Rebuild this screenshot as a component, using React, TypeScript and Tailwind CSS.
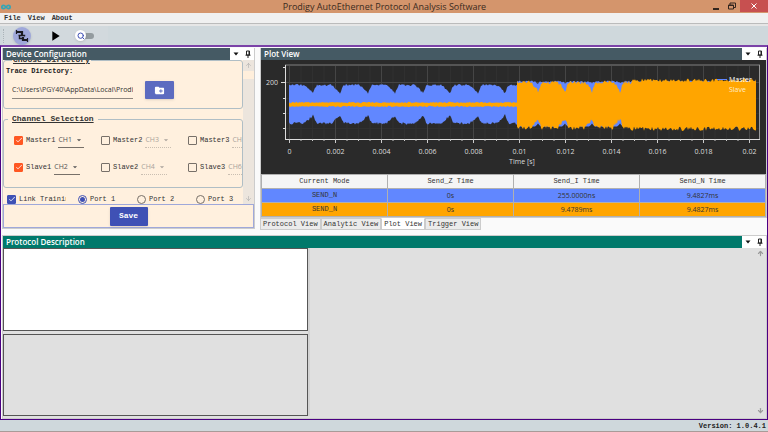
import { ArrowDown, ArrowUp, Infinity as InfinityIcon, Search } from "lucide-react";
import { MdArrowDropDown, MdCheck, MdCreateNewFolder, MdPlayArrow } from "react-icons/md";

const Pin = () => (
    <svg viewBox="0 0 8 8" className="h-2 w-2" fill="none" stroke="#222" aria-hidden="true">
        <path d="M2.5 1h3v4h-3zM1.5 5.2h5M4 5.2V8" />
        <path d="M5 1v4" />
    </svg>
);

type PanelHeaderProps = { title: string; color: string };

const PanelHeader = ({ title, color }: PanelHeaderProps) => (
    <div className="flex h-3 shrink-0 items-stretch bg-white">
        <h2 className={`flex flex-1 items-center pl-[3px] text-[8px] leading-3 font-semibold text-white ${color}`}>{title}</h2>
        <div className="flex w-6 items-center justify-around">
            <button aria-label={`${title} menu`}>
                <svg viewBox="0 0 6 4" className="h-1 w-[6px]" aria-hidden="true"><path d="M0.5 0.5h5L3 3.5z" fill="#111" /></svg>
            </button>
            <button aria-label={`Pin ${title}`}><Pin /></button>
        </div>
    </div>
);

type CheckProps = { id: string; label: string; checked?: boolean; blue?: boolean };

const Check = ({ id, label, checked, blue }: CheckProps) => (
    <div className="flex shrink-0 items-center gap-[3px]">
        <span className="grid place-items-center">
            <input
                id={id}
                type="checkbox"
                defaultChecked={checked}
                className={`peer h-[9px] w-[9px] appearance-none rounded-[1px] border border-[#777069] [grid-area:1/1] ${blue ? "checked:border-[#3f51b5] checked:bg-[#3f51b5]" : "checked:border-[#ff5722] checked:bg-[#ff5722]"}`}
            />
            <MdCheck className="pointer-events-none invisible h-2 w-2 text-white [grid-area:1/1] peer-checked:visible" />
        </span>
        <label htmlFor={id} className="whitespace-nowrap">{label}</label>
    </div>
);

type ChannelProps = { name: string; channel: string; active?: boolean };

const Channel = ({ name, channel, active }: ChannelProps) => (
    <div className="flex items-center gap-[3px]">
        <Check id={name} label={name} checked={active} />
        <div className={`flex h-4 w-[26px] shrink-0 items-center justify-between border-b ${active ? "border-[#777069] text-[#555]" : "border-dotted border-[#c9beb1] text-[#aaa39c]"}`}>
            <select aria-label={`${name} channel`} disabled={!active} className="w-4 appearance-none bg-transparent font-['Open_Sans',sans-serif] text-[7px] leading-3 opacity-100">
                <option>{channel}</option>
            </select>
            <MdArrowDropDown className="h-[10px] w-[10px]" />
        </div>
    </div>
);

const DeviceConfiguration = () => (
    <section className="flex w-[253px] shrink-0 flex-col border border-t-0 border-[#ccc] bg-[#fff0de]">
        <PanelHeader title="Device Configuration" color="bg-[#455a64]" />
        <div className="flex h-[144px] overflow-hidden font-['Liberation_Mono',monospace] text-[7px] leading-3 text-[#333]">
            <div className="min-w-0 flex-1">
                <fieldset className="-mt-[5px] h-[54px] min-w-0 rounded-[3px] border border-[#b0bec5] px-[2px]">
                    <legend className="ml-[6px] px-px text-[8px] leading-[10px] font-bold underline">Choose Directory</legend>
                    <label htmlFor="trace" className="block font-bold text-[#222]">Trace Directory:</label>
                    <div className="mt-1 flex items-center gap-3 pl-[6px]">
                        <input
                            id="trace"
                            defaultValue="C:\Users\PGY40\AppData\Local\Prodigy"
                            className="h-[18px] w-[121px] border-b border-[#8f877f] bg-transparent font-['Open_Sans',sans-serif] text-[7px] text-[#333] outline-none"
                        />
                        <button aria-label="Choose folder" className="flex h-[18px] w-[29px] items-center justify-center rounded-[1px] bg-[#5c6bc0] text-white shadow-sm">
                            <MdCreateNewFolder className="h-[11px] w-[11px]" />
                        </button>
                    </div>
                </fieldset>
                <fieldset className="mt-[5px] h-[74px] min-w-0 overflow-hidden rounded-[3px] border border-[#b0bec5]">
                    <legend className="ml-1 px-1 text-[8px] leading-[10px] font-bold underline">Channel Selection</legend>
                    <div className="grid grid-cols-[87px_87px_87px] gap-y-[11px] pt-2 pl-[10px]">
                        <Channel name="Master1" channel="CH1" active />
                        <Channel name="Master2" channel="CH3" />
                        <Channel name="Master3" channel="CH5" />
                        <Channel name="Slave1" channel="CH2" active />
                        <Channel name="Slave2" channel="CH4" />
                        <Channel name="Slave3" channel="CH6" />
                    </div>
                </fieldset>
                <div className="mt-[5px] flex pl-1">
                    <div className="mr-3 w-[59px] shrink-0 overflow-hidden"><Check id="training" label="Link Training" checked blue /></div>
                    {["Port 1", "Port 2", "Port 3"].map((port, i) => (
                        <label key={port} className="flex w-[59px] shrink-0 items-center gap-[3px] whitespace-nowrap">
                            <input type="radio" name="port" defaultChecked={i === 0} className="h-[9px] w-[9px] appearance-none rounded-full border border-[#777069] bg-clip-content p-px checked:border-[#3f51b5] checked:bg-[#3f51b5]" />
                            {port}
                        </label>
                    ))}
                </div>
            </div>
            <div className="flex w-[11px] flex-col items-center justify-between bg-[#ece5dd] text-[#aaa]">
                <button aria-label="Scroll up" className="flex h-[11px] items-center"><ArrowUp className="h-[7px] w-[7px]" /></button>
                <div className="mb-auto h-2 w-full bg-[#ffefdc]" />
                <button aria-label="Scroll down" className="flex h-[11px] items-center"><ArrowDown className="h-[7px] w-[7px]" /></button>
            </div>
        </div>
        <div className="flex h-6 items-center justify-center border border-[#9fa8da]">
            <button className="h-[19px] w-[38px] rounded-[1px] bg-[#3f51b5] font-['Liberation_Mono',monospace] text-[8px] font-bold text-white shadow-sm">Save</button>
        </div>
    </section>
);

// plot geometry, in svg units
const X0 = 28;
const STEP = 46;
const BURST = 256;
const END = 495;
const blueNotches = [52, 79, 107, 134, 162, 189, 217, 244];
const orangeNotches = [277, 304, 331, 359];

const noise = (n: number) => {
    const v = Math.sin(n * 127.1) * 43758.5453;
    return v - Math.floor(v);
};

// slow fall before a notch, quick rise after it
const dip = (x: number, notches: number[], depth: number, before: number, after: number) =>
    notches.reduce((most, n) => {
        const d = x - n;
        const t = d < 0 ? 1 + d / before : 1 - d / after;
        return t > 0 ? Math.max(most, Math.pow(t, 1.2) * depth) : most;
    }, 0);

const band = (from: number, to: number, top: (x: number) => number, bottom: (x: number) => number) => {
    const up: string[] = [];
    const down: string[] = [];
    for (let x = from; x <= to; x++) {
        up.push(`${x} ${top(x).toFixed(1)}`);
        down.unshift(`${x} ${bottom(x).toFixed(1)}`);
    }
    return `M${up.join("L")}L${down.join("L")}Z`;
};

const masterPath = band(X0, BURST, (x) => 24 + noise(x) * 2 + dip(x, blueNotches, 8, 9, 4), (x) => 62 + noise(x + 900) * 2.5 - dip(x, blueNotches, 8, 9, 4));
const masterTail = band(BURST, END - 1, (x) => 20.5 + noise(x) * 2 + dip(x, orangeNotches, 2, 3, 3), (x) => 66.5 - dip(x, orangeNotches, 3, 3, 3));
const slaveLine = band(X0, BURST, (x) => 41.8 + noise(x + 50) * 1.4, (x) => 45.8 + noise(x + 70) * 1.4);
const slavePath = band(
    BURST,
    END,
    (x) => (x > 370 ? 18.5 : 20.5) + noise(x + 3) * 3.6 + dip(x, orangeNotches, 9, 7, 4),
    (x) => (x > 370 ? 66.5 : 65.5) + noise(x + 11) * 4.4 - dip(x, orangeNotches, 9, 8, 4),
);

const Plot = () => (
    <svg viewBox="0 0 505 114" className="block w-full bg-[#2a2a2a] font-['Open_Sans',sans-serif] text-[7px]" role="img" aria-label="Master and slave signal over time">
        <g stroke="#303030">
            {Array.from({ length: 40 }, (_, i) => <path key={i} d={`M${X0 + i * 11.5 + 12} 5V79`} />)}
            <path d="M24 38.5H498M24 53.5H498M24 68.5H498" />
        </g>
        <g stroke="#454545">
            {Array.from({ length: 11 }, (_, i) => <path key={i} d={`M${X0 + i * STEP + 0.5} 5V79`} />)}
            <path d="M24 22.5H498" />
        </g>
        <path d="M24 5H499" stroke="#555" strokeWidth="2" />
        <path d="M498.5 5V79" stroke="#999" />
        <path d={masterPath} fill="#6187ff" />
        <path d={masterTail} fill="#6187ff" />
        <path d={slaveLine} fill="#ffa500" />
        <path d={slavePath} fill="#ffa500" />
        <path d="M24.5 5V80M24 79.5H499M20 22.5H24M22 7.5H24M22 38.5H24M22 53.5H24M22 68.5H24" stroke="#ddd" fill="none" />
        {Array.from({ length: 41 }, (_, i) => (
            <path key={i} d={`M${X0 + i * 11.5 + 0.5} 79v${i % 4 === 0 ? 4 : 2}`} stroke="#ccc" />
        ))}
        <g fill="#ddd">
            <text x="17" y="25" textAnchor="end">200</text>
            {["0", "0.002", "0.004", "0.006", "0.008", "0.01", "0.012", "0.014", "0.016", "0.018", "0.02"].map((t, i) => (
                <text key={t} x={X0 + i * STEP + 0.5} y="94" textAnchor="middle">{t}</text>
            ))}
            <text x="261" y="104" textAnchor="middle">Time [s]</text>
        </g>
        <path d="M456 19.5h10" stroke="#6187ff" />
        <g fill="#fff">
            <text x="468" y="22">Master</text>
            <text x="468" y="32" fill="#ffedcc">Slave</text>
        </g>
    </svg>
);

const rows = [
    { color: "bg-[#6187ff]", cells: ["0s", "255.0000ns", "9.4827ms"] },
    { color: "bg-[#ffa500]", cells: ["0s", "9.4789ms", "9.4827ms"] },
];

const tabs = ["Protocol View", "Analytic View", "Plot View", "Trigger View"];

const PlotView = () => (
    <section className="min-w-0 flex-1">
        <div className="border border-t-0 border-[#ccc]">
            <PanelHeader title="Plot View" color="bg-[#455a64]" />
            <Plot />
            <table className="w-full table-fixed border-collapse text-center font-['Liberation_Mono',monospace] text-[7px] leading-[13px] text-[#333]">
                <thead>
                    <tr className="bg-[#f5f5f5]">
                        {["Current Mode", "Send_Z Time", "Send_I Time", "Send_N Time"].map((h) => (
                            <th key={h} className="border border-[#b0b0b0] p-0 font-normal">{h}</th>
                        ))}
                    </tr>
                </thead>
                <tbody>
                    {rows.map((row) => (
                        <tr key={row.color} className={row.color}>
                            <td className="border border-[#b0b0b0] p-0">SEND_N</td>
                            {row.cells.map((cell, i) => (
                                <td key={i} className="border border-[#b0b0b0] p-0 font-['Open_Sans',sans-serif]">{cell}</td>
                            ))}
                        </tr>
                    ))}
                </tbody>
            </table>
        </div>
        <div role="tablist" className="flex font-['Liberation_Mono',monospace] text-[7px] leading-[10px] text-[#333]">
            {tabs.map((tab) => (
                <button
                    key={tab}
                    role="tab"
                    aria-selected={tab === "Plot View"}
                    className="border border-[#ccc] bg-[#ebebeb] px-[2px] whitespace-nowrap aria-selected:border-t-white aria-selected:bg-white"
                >
                    {tab}
                </button>
            ))}
        </div>
    </section>
);

const ProtocolDescription = () => (
    <section className="mt-[5px] flex flex-1 flex-col border border-[#ccc] bg-[#e0e0e0]">
        <PanelHeader title="Protocol Description" color="bg-[#00796b]" />
        <div className="flex flex-1 pb-[2px]">
            <div className="flex w-2/5 flex-col gap-[3px]">
                <div className="flex-1 border border-[#555] bg-white" />
                <div className="flex-1 border border-[#555]" />
            </div>
            <div className="flex flex-1 flex-col items-end justify-between border-l-2 border-[#d3d3d3] p-[2px] text-[#999]">
                <button aria-label="Scroll up"><ArrowUp className="h-[7px] w-[7px]" strokeWidth={4} /></button>
                <button aria-label="Scroll down"><ArrowDown className="h-[7px] w-[7px]" strokeWidth={4} /></button>
            </div>
        </div>
    </section>
);

const TitleBar = () => (
    <header className="flex h-[13px] items-center bg-[#d4956c] pl-px">
        <InfinityIcon className="h-[10px] w-[10px] text-[#35a5b5]" strokeWidth={4} />
        <h1 className="flex-1 pl-[46px] text-center font-['Open_Sans',sans-serif] text-[9px] leading-3 text-[#3a2a20]">Prodigy AutoEthernet Protocol Analysis Software</h1>
        <div className="flex h-3 items-center self-start text-[#33261e]">
            <button aria-label="Minimize" className="mr-2">
                <svg viewBox="0 0 8 8" className="h-2 w-2" aria-hidden="true"><path d="M1 7h6" stroke="currentColor" strokeWidth="2" /></svg>
            </button>
            <button aria-label="Restore" className="mr-1">
                <svg viewBox="0 0 8 8" className="h-2 w-2" fill="none" stroke="currentColor" aria-hidden="true"><path d="M0.5 3h5v4h-5zM2 3V1h5.5v4.5h-2M0.5 3.5h5" /></svg>
            </button>
            <button aria-label="Close" className="flex h-3 w-7 items-center justify-center bg-[#c75050] text-white">
                <svg viewBox="0 0 6 6" className="h-[6px] w-[6px]" aria-hidden="true"><path d="M0.5 0.5l5 5M5.5 0.5l-5 5" stroke="currentColor" /></svg>
            </button>
        </div>
    </header>
);

const Toolbar = () => (
    <div className="h-[21px] border-t-2 border-[#e6e6e6] bg-[#cfd8dc] pl-[2px]">
        <div className="flex h-full w-[106px] items-center bg-[#d2d9dd]">
            <span className="mr-[9px] ml-px h-[14px] border-l border-dotted border-[#aab3b8]" />
            <button aria-label="Connect" className="flex h-[18px] w-[18px] items-center justify-center rounded-full bg-[#9fa8da] shadow-sm">
                <svg viewBox="0 0 14 14" className="h-[14px] w-[14px]" fill="none" stroke="#1b1b22" aria-hidden="true">
                    <path d="M1.5 1v4M12.5 9v4" strokeWidth="1.2" />
                    <path d="M1.5 3H7V6.5" strokeWidth="2.2" />
                    <path d="M3.5 6.5H9.5V7.5M4.5 6.5V9.5H8" strokeWidth="1.4" />
                    <path d="M8 8V11H12.5" strokeWidth="2.2" />
                </svg>
            </button>
            <button aria-label="Run" className="ml-4"><MdPlayArrow className="h-4 w-4 text-black" /></button>
            <button role="switch" aria-checked="false" aria-label="Search" className="ml-3 flex items-center">
                <span className="z-10 flex h-[11px] w-[11px] items-center justify-center rounded-full bg-white shadow-sm">
                    <Search className="h-2 w-2 text-[#3f51b5]" strokeWidth={3} />
                </span>
                <span className="-ml-1 h-[6px] w-3 rounded-full bg-[#939b9f]" />
            </button>
        </div>
    </div>
);

const App = () => {
    return (
        <div className="flex min-h-screen flex-col bg-[#cfd8dc] font-['Open_Sans',sans-serif]">
            <TitleBar />
            <nav className="flex h-[11px] items-center gap-[7px] border-b border-[#bbb] bg-[#f0f0f0] pl-1 font-['Liberation_Mono',monospace] text-[7px] leading-[10px] font-bold text-[#333]">
                {["File", "View", "About"].map((item) => <button key={item}>{item}</button>)}
            </nav>
            <Toolbar />
            <main className="flex flex-1 flex-col border border-t-2 border-[#4b0082] border-t-[#7b42a8] bg-[#fafafa] pt-px pl-px">
                <div className="flex items-start gap-[5px]">
                    <DeviceConfiguration />
                    <PlotView />
                </div>
                <ProtocolDescription />
            </main>
            <footer className="h-3 border-b border-[#a89b98] pr-[2px] text-right font-['Liberation_Mono',monospace] text-[7px] leading-3 font-bold text-[#222]">
                Version: 1.0.4.1
            </footer>
        </div>
    );
};

export default App;
